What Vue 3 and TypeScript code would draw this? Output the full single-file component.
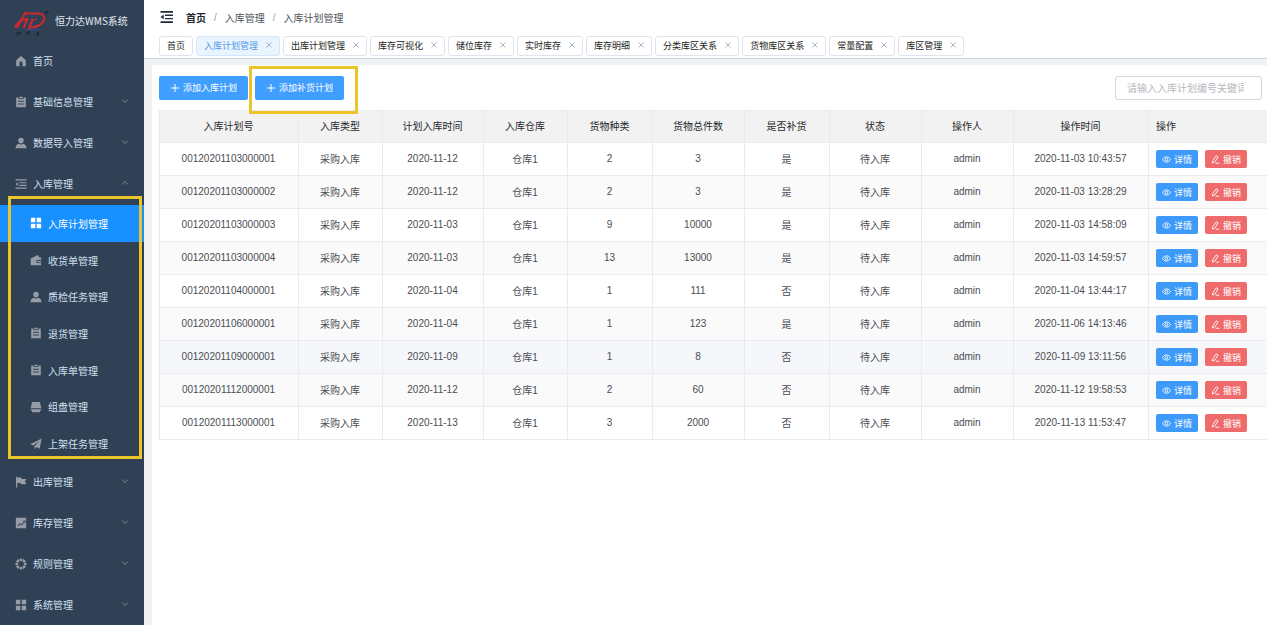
<script setup lang="ts">
import { ref } from 'vue'

interface MenuItem {
  label: string
  icon: string
  open?: boolean
  leaf?: boolean
  children?: MenuItem[]
}

interface Tab {
  label: string
  closable: boolean
}

interface Plan {
  id: string
  type: string
  planDate: string
  warehouse: string
  kinds: number
  total: number
  restock: string
  status: string
  operator: string
  time: string
}

const icons: Record<string, string> = {
  home: 'M7 1.2 12.6 6v7H8.8V9.2a1.8 1.8 0 0 0-3.6 0V13H1.4V6z',
  clipboard:
    'M4 1.8V3.6h6V1.8h2.6V13H1.4V1.8zM5 .8h4v1.9H5zM3.6 5.6v1h6.8v-1zM3.6 8.8v1h6.8v-1z',
  user: 'M7 .8a3.2 3.2 0 0 1 3.2 3.3C10.2 6 8.900 7.500 7 7.500S3.800 6 3.800 4.100A3.200 3.200 0 0 1 7 .8zM4.600 7.800 7 9l2.400-1.200c2.600.6 3.900 2.300 4 5.200H.6c.1-2.900 1.400-4.600 4-5.200z',
  fold: 'M.6 1.600h12.800v1.300H.6zM5 5h8.400v1.200H5zM5 8h8.400v1.200H5zM.6 11.200h12.800v1.300H.6zM.8 7.100 3.600 5v4.200z',
  grid: 'M1 1h5.200v5.200H1zM7.800 1H13v5.200H7.800zM1 7.800h5.200V13H1zM7.800 7.800H13V13H7.800z',
  wallet:
    'M.8 5.200 9.200 1.200l1.700 3H13v2.600H9.200a1.900 1.900 0 0 0 0 3.800H13V13H.8zM9.400 7.800H13v1.800H9.400a.9.9 0 0 1 0-1.800z',
  printer: 'M2.400 1.200h9.200L13.200 8.500H.8zM.8 9.500h12.400v1.700h-1.600V13H2.400v-1.800H.8z',
  promotion: 'M13.600.6 11.200 12.600 7.400 10.600 5.600 13.200 5.200 9.600 11 3.600 3.800 8.800.4 7.400z',
  flag: 'M1.200.8h1.300v1h5v1.600h5.900L11.600 6.500l1.800 3.100H6.800V8.200H2.500v5.200H1.200z',
  chart:
    'M1 1h12v12H1zM3 9.800l1 .9 2.200-2.400 1.900 1.500 3.200-4.300.1 1.700.8-.1V4.200H9.400v.9h1.200L7.900 8.500 6.100 7.100z',
  help: 'M5.900.6h2.200v3.200a3.400 3.400 0 0 0-2.200 0zM4.900.9 5.300 4A3.400 3.400 0 0 0 4 5.300L.9 4.900A6.500 6.500 0 0 1 4.900.9zM9.100.9a6.500 6.500 0 0 1 4 4L10 5.300A3.400 3.400 0 0 0 8.700 4zM.6 5.700h3.200a3.400 3.400 0 0 0 0 2.600H.6zM10.200 5.700h3.200v2.600h-3.200a3.400 3.400 0 0 0 0-2.600zM.9 9.100 4 8.700A3.400 3.400 0 0 0 5.300 10l-.4 3.100a6.500 6.500 0 0 1-4-4zM13.100 9.100a6.500 6.500 0 0 1-4 4L8.700 10A3.400 3.400 0 0 0 10 8.700zM5.900 10.200a3.400 3.400 0 0 0 2.200 0v3.200H5.900z',
}

const menu: MenuItem[] = [
  { label: '首页', icon: 'home', leaf: true },
  { label: '基础信息管理', icon: 'clipboard' },
  { label: '数据导入管理', icon: 'user' },
  {
    label: '入库管理',
    icon: 'fold',
    open: true,
    children: [
      { label: '入库计划管理', icon: 'grid' },
      { label: '收货单管理', icon: 'wallet' },
      { label: '质检任务管理', icon: 'user' },
      { label: '退货管理', icon: 'clipboard' },
      { label: '入库单管理', icon: 'clipboard' },
      { label: '组盘管理', icon: 'printer' },
      { label: '上架任务管理', icon: 'promotion' },
    ],
  },
  { label: '出库管理', icon: 'flag' },
  { label: '库存管理', icon: 'chart' },
  { label: '规则管理', icon: 'help' },
  { label: '系统管理', icon: 'grid' },
]

const tabs = ref<Tab[]>(
  [
    '首页', '入库计划管理', '出库计划管理', '库存可视化', '储位库存', '实时库存',
    '库存明细', '分类库区关系', '货物库区关系', '常量配置', '库区管理',
  ].map((label, i) => ({ label, closable: i > 0 })),
)
const active = ref('入库计划管理')
const keyword = ref('')

const columns = [
  '入库计划号', '入库类型', '计划入库时间', '入库仓库', '货物种类', '货物总件数',
  '是否补货', '状态', '操作人', '操作时间', '操作',
]

const plan = (
  id: string, planDate: string, kinds: number, total: number, restock: string, time: string,
): Plan => ({
  id, planDate, kinds, total, restock, time,
  type: '采购入库', warehouse: '仓库1', status: '待入库', operator: 'admin',
})

const plans: Plan[] = [
  plan('00120201103000001', '2020-11-12', 2, 3, '是', '2020-11-03 10:43:57'),
  plan('00120201103000002', '2020-11-12', 2, 3, '是', '2020-11-03 13:28:29'),
  plan('00120201103000003', '2020-11-03', 9, 10000, '是', '2020-11-03 14:58:09'),
  plan('00120201103000004', '2020-11-03', 13, 13000, '是', '2020-11-03 14:59:57'),
  plan('00120201104000001', '2020-11-04', 1, 111, '否', '2020-11-04 13:44:17'),
  plan('00120201106000001', '2020-11-04', 1, 123, '是', '2020-11-06 14:13:46'),
  plan('00120201109000001', '2020-11-09', 1, 8, '否', '2020-11-09 13:11:56'),
  plan('00120201112000001', '2020-11-12', 2, 60, '否', '2020-11-12 19:58:53'),
  plan('00120201113000001', '2020-11-13', 3, 2000, '否', '2020-11-13 11:53:47'),
]

function closeTab(label: string) {
  tabs.value = tabs.value.filter((t) => t.label !== label)
}
</script>

<template>
  <div class="app">
    <aside class="sidebar">
      <div class="brand">
        <svg class="logo" viewBox="0 0 36 28" aria-hidden="true">
          <g fill="none" stroke="#d3262f" stroke-width="2">
            <path d="M11.500 2 3 18" />
            <path d="M1 17.500C4 11 9 9 13.500 9.300L9.500 18" />
            <path d="M11 3.500H24C31 4 31.500 9 28 13 25 16.500 21 17.500 15 17.500L19 9.500" />
            <path d="M16.500 9.500H23" stroke-width="1" />
          </g>
          <path d="M12 19.500H24" stroke="#3a4c9c" stroke-width="1" />
          <g fill="none" stroke="#151b25" stroke-width="1">
            <path d="M4 21.500 2.500 25.500M3 23.500 6 23M7 21.500 5.500 25.500M13 22 16 22 14.500 25.500M14.500 21.500 12 25M23 22.500 25 22.500M24.500 21.500 23.500 25M21.500 25H25" stroke-width=".8" />
            <path d="M30.500 3.500C31 1.500 33 1 35 1.500M32 3H34" stroke-width=".8" />
          </g>
        </svg>
        <span>恒力达WMS系统</span>
      </div>
      <nav>
        <template v-for="item in menu" :key="item.label">
          <a class="item" href="#" @click.prevent>
            <svg class="icon" viewBox="0 0 14 14" aria-hidden="true">
              <path :d="icons[item.icon]" fill="currentColor" fill-rule="evenodd" />
            </svg>
            <span>{{ item.label }}</span>
            <svg v-if="!item.leaf" class="chevron" :class="{ up: item.open }" viewBox="0 0 8 8" aria-hidden="true">
              <path d="M1 2.500 4 5.500 7 2.500" fill="none" stroke="currentColor" stroke-width=".8" />
            </svg>
          </a>
          <div v-if="item.children" class="submenu">
            <a
              v-for="child in item.children"
              :key="child.label"
              class="item sub"
              :class="{ active: child.label === active }"
              href="#"
              @click.prevent
            >
              <svg class="icon" viewBox="0 0 14 14" aria-hidden="true">
                <path :d="icons[child.icon]" fill="currentColor" fill-rule="evenodd" />
              </svg>
              <span>{{ child.label }}</span>
            </a>
            <div class="frame menu-frame"></div>
          </div>
        </template>
      </nav>
    </aside>

    <div class="page">
      <header class="header">
        <div class="crumb-row">
          <button class="toggle" type="button" aria-label="折叠菜单">
            <svg viewBox="0 0 14 14" aria-hidden="true">
              <path
                d="M1.500 1h12.500v1.700H1.500zM6 4.600h8v1.300H6zM6 7.900h8v1.300H6zM1.500 11.200h12.500v1.700H1.500zM1.500 6.900 4.700 4.600v4.600z"
                fill="currentColor"
              />
            </svg>
          </button>
          <nav class="crumbs">
            <a class="root" href="#" @click.prevent>首页</a>
            <i>/</i>
            <span>入库管理</span>
            <i>/</i>
            <span>入库计划管理</span>
          </nav>
        </div>
        <div class="tabs">
          <div v-for="tab in tabs" :key="tab.label" class="tab" :class="{ current: tab.label === active }">
            <a href="#" @click.prevent="active = tab.label">{{ tab.label }}</a>
            <button v-if="tab.closable" type="button" :aria-label="'关闭' + tab.label" @click="closeTab(tab.label)">
              <svg viewBox="0 0 6 6" aria-hidden="true">
                <path d="M.5.5 5.500 5.500M5.500.5.5 5.500" stroke="currentColor" stroke-width=".7" />
              </svg>
            </button>
          </div>
        </div>
      </header>

      <main class="card">
        <div class="toolbar">
          <button class="primary" type="button">
            <svg viewBox="0 0 8 8" aria-hidden="true"><path d="M4 0V8M0 4H8" stroke="currentColor" /></svg>
            添加入库计划
          </button>
          <div class="marked">
            <button class="primary" type="button">
              <svg viewBox="0 0 8 8" aria-hidden="true"><path d="M4 0V8M0 4H8" stroke="currentColor" /></svg>
              添加补货计划
            </button>
            <div class="frame button-frame"></div>
          </div>
          <input
            v-model="keyword"
            class="search"
            type="text"
            aria-label="入库计划编号关键词"
            placeholder="请输入入库计划编号关键词"
          />
        </div>

        <table class="table">
          <colgroup>
            <col v-for="n in columns.length" :key="n" :class="'c' + n" />
          </colgroup>
          <thead>
            <tr>
              <th v-for="c in columns" :key="c" scope="col">{{ c }}</th>
            </tr>
          </thead>
          <tbody>
            <tr v-for="(p, i) in plans" :key="p.id" :class="{ hovered: i === 6 }">
              <td>{{ p.id }}</td>
              <td>{{ p.type }}</td>
              <td>{{ p.planDate }}</td>
              <td>{{ p.warehouse }}</td>
              <td>{{ p.kinds }}</td>
              <td>{{ p.total }}</td>
              <td>{{ p.restock }}</td>
              <td>{{ p.status }}</td>
              <td>{{ p.operator }}</td>
              <td>{{ p.time }}</td>
              <td>
                <div class="actions">
                  <button class="detail" type="button">
                    <svg viewBox="0 0 9 9" fill="none" stroke="currentColor" aria-hidden="true">
                      <path d="M.5 4.500C2.500 1 6.500 1 8.500 4.500 6.500 8 2.500 8 .5 4.500z" stroke-width=".9" />
                      <circle cx="4.500" cy="4.500" r="1.300" stroke-width=".9" />
                    </svg>
                    详情
                  </button>
                  <button class="revoke" type="button">
                    <svg viewBox="0 0 9 9" fill="none" stroke="currentColor" aria-hidden="true">
                      <path d="M5.300.8 7.100 2 3.800 7 1.300 8 1.800 5.700zM4.600 8.200H8.300" stroke-width=".9" />
                    </svg>
                    撤销
                  </button>
                </div>
              </td>
            </tr>
          </tbody>
        </table>
      </main>
    </div>
  </div>
</template>

<style>
body {
  margin: 0;
  overflow: hidden;
}
</style>

<style scoped>
* {
  box-sizing: border-box;
}

.app {
  display: flex;
  height: 100vh;
  overflow: hidden;
  background: #f0f1f2;
  color: #4e5259;
  font-family: "Liberation Sans", "Noto Sans CJK SC", sans-serif;
  font-size: 10px;
}

a {
  color: inherit;
  text-decoration: none;
}

button {
  border: 0;
  padding: 0;
  background: none;
  color: inherit;
  font: inherit;
  cursor: pointer;
}

svg {
  display: block;
  flex: none;
}

/* sidebar */
.sidebar {
  flex: none;
  width: 144px;
  overflow: hidden;
  background: #304156;
  color: #d3e0ef;
}

.brand {
  display: flex;
  align-items: center;
  gap: 5px;
  height: 41px;
  padding-left: 14px;
  color: #e3eaf2;
  font-family: "Noto Sans CJK SC", sans-serif;
  white-space: nowrap;
}

.logo {
  width: 36px;
  height: 28px;
  margin-top: 6px;
}

.item {
  display: flex;
  align-items: center;
  height: 41px;
  padding: 0 15px 2px;
  white-space: nowrap;
}

.icon {
  width: 12px;
  height: 12px;
  margin-right: 6px;
  color: #979da7;
}

.chevron {
  width: 8px;
  height: 8px;
  margin: 0 0 2px auto;
  color: #909cac;
}

.chevron.up {
  transform: rotate(180deg);
}

.submenu {
  position: relative;
  display: grid;
  grid-template-rows: repeat(7, 1fr);
  height: 257px;
}

.item.sub {
  height: auto;
  padding: 0 0 0 30px;
}

.item.active,
.item.active .icon {
  background: #1890ff;
  color: #fff;
}

.frame {
  position: absolute;
  border: 3px solid #ebc42c;
  pointer-events: none;
}

.menu-frame {
  top: -9px;
  right: 2px;
  bottom: 3px;
  left: 8px;
}

/* header */
.page {
  display: flex;
  flex: 1;
  flex-direction: column;
  min-width: 0;
}

.header {
  flex: none;
  padding: 0 15px 2px;
  border-bottom: 1px solid #cfd3da;
  background: #fff;
}

.crumb-row {
  display: flex;
  align-items: center;
  gap: 13px;
  height: 36px;
  padding-bottom: 2px;
}

.toggle {
  color: #1f2c3d;
}

.toggle svg {
  width: 14px;
  height: 14px;
}

.crumbs {
  display: flex;
  align-items: center;
  gap: 8px;
}

.crumbs i {
  color: #9a9fa8;
  font-style: normal;
}

.crumbs .root {
  color: #25282d;
  font-weight: 700;
}

.tabs {
  display: flex;
  gap: 3px;
}

.tab {
  display: flex;
  align-items: center;
  gap: 8px;
  height: 20px;
  padding: 0 7px 2px;
  border: 1px solid #dfe4ee;
  border-radius: 3px;
  background: #fff;
  color: #1c1e22;
  font-size: 9px;
  white-space: nowrap;
}

.tab button {
  color: #8493ab;
}

.tab svg {
  width: 6px;
  height: 6px;
}

.tab.current {
  border-color: #d3e8fd;
  background: #e9f4ff;
  color: #519de9;
}

/* content */
.card {
  flex: 1;
  margin: 6px 0 0 8px;
  padding: 11px 0 0 7px;
  background: #fff;
}

.toolbar {
  display: flex;
  align-items: center;
  gap: 7px;
  padding-right: 5px;
  margin-bottom: 10px;
}

.primary {
  display: flex;
  align-items: center;
  gap: 4px;
  height: 24px;
  padding: 0 11px 1px 12px;
  border-radius: 2px;
  background: #409eff;
  color: #fff;
  font-size: 9px;
  white-space: nowrap;
}

.primary svg {
  width: 8px;
  height: 8px;
}

.marked {
  position: relative;
}

.button-frame {
  top: -10px;
  right: -14px;
  bottom: -14px;
  left: -6px;
}

.search {
  width: 147px;
  height: 24px;
  margin-left: auto;
  padding: 0 17px 0 11px;
  border: 1px solid #d3d6dd;
  border-radius: 3px;
  outline: 0;
  color: #555a62;
  font: inherit;
}

.search::placeholder {
  color: #b4b8c0;
}

.table {
  width: 100%;
  border-top: 1px solid #e9ebef;
  border-left: 1px solid #e9ebef;
  border-spacing: 0;
  table-layout: fixed;
}

.c1 { width: 139px; }
.c2, .c4 { width: 84px; }
.c3 { width: 101px; }
.c5, .c7 { width: 85px; }
.c6, .c8, .c9 { width: 92px; }
.c10 { width: 135px; }

th,
td {
  height: 33px;
  padding: 0 1px 2px 0;
  border-right: 1px solid #e9ebef;
  border-bottom: 1px solid #e9ebef;
  color: #4a4d53;
  font-weight: 400;
  text-align: center;
  white-space: nowrap;
}

th {
  height: 32px;
  background: #f2f2f2;
  color: #26282c;
}

th:last-child,
td:last-child {
  padding-left: 7px;
  border-right: 0;
  text-align: left;
}

td:last-child {
  padding-bottom: 0;
}

tbody tr:nth-child(even) {
  background: #fafafa;
}

tbody tr.hovered {
  background: #f5f7fa;
}

.actions {
  display: flex;
  gap: 7px;
}

.actions button {
  display: flex;
  align-items: center;
  gap: 3px;
  height: 18px;
  padding: 0 6px;
  border-radius: 2px;
  color: #fff;
  font-size: 9px;
}

.actions svg {
  width: 9px;
  height: 9px;
}

.detail {
  background: #3d9af8;
}

.revoke {
  background: #ef6a6b;
}
</style>
